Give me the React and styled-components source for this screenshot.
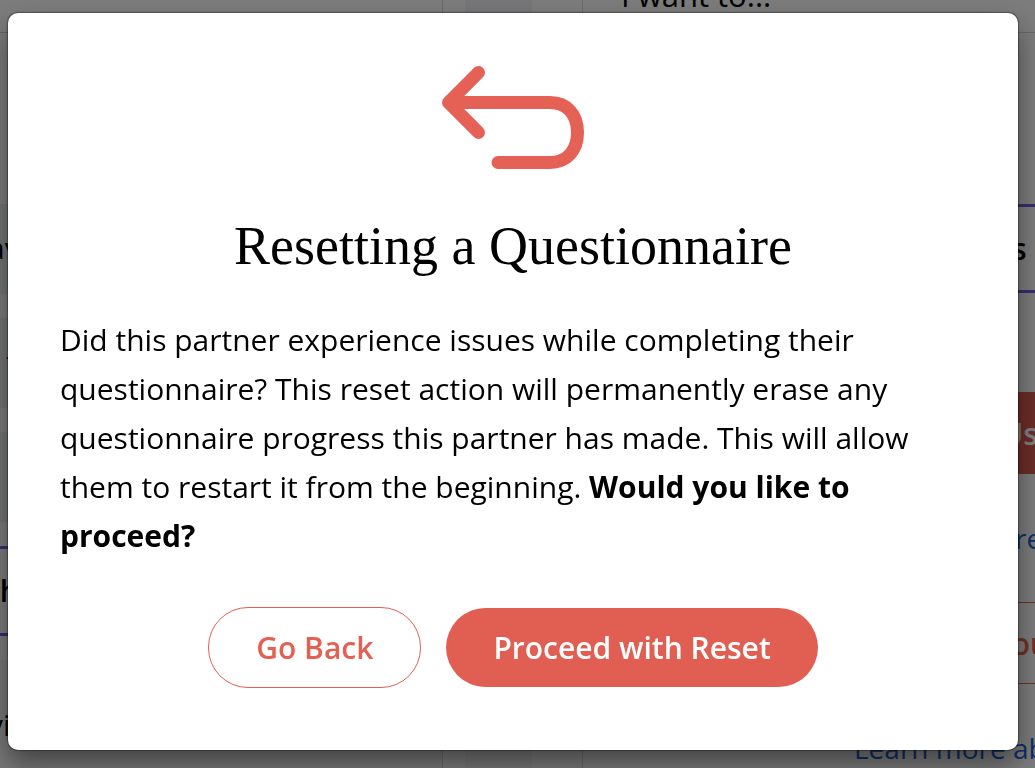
import styled, { createGlobalStyle } from 'styled-components';

const GlobalStyle = createGlobalStyle`
  * {
    box-sizing: border-box;
  }
  body {
    margin: 0;
    font-family: 'Open Sans', 'Noto Sans', sans-serif;
    font-size: 30px;
    color: #000;
    background: #f8f8f8;
  }
`;

const Page = styled.main`
  display: grid;
  grid-template-columns: 443px 139px 1fr;
  height: 100vh;
  overflow: hidden;
`;

const Column = styled.section`
  min-width: 0;
  height: 100vh;
  overflow: hidden;
  background: #f8f8f9;
  border: solid #d4d4d4;
  border-width: ${(props) => (props.$right ? '0 0 0 1px' : '0 1px 0 0')};
`;

const Gutter = styled.div`
  margin: 0 50px 0 22px;
  background: #efeff3;
`;

const ColumnHeader = styled.header`
  display: flex;
  align-items: flex-end;
  height: 33px;
  padding: 0 0 17px 38px;
  border-bottom: 1px solid #cfcfcf;
`;

const HeaderText = styled.h2`
  margin: 0;
  font-size: 31px;
  font-weight: 400;
  line-height: 40px;
`;

const Rows = styled.div`
  display: grid;
  gap: 24px;
  padding-top: 171px;
`;

const Row = styled.div`
  height: 90px;
  padding-left: ${(props) => (props.$inset ? '6px' : '0')};
  text-indent: ${(props) => (props.$inset ? '0' : '-12px')};
  line-height: 88px;
  background: #e6eae8;
`;

const LastRow = styled(Row)`
  height: 130px;
  line-height: 130px;
  background: #f1f1f4;
`;

const Selected = styled.div`
  height: 90px;
  text-indent: -12px;
  font-weight: 600;
  line-height: 84px;
  border: solid #6c5ce0;
  border-width: 3px 0;
`;

const Actions = styled.div`
  display: flex;
  flex-direction: column;
  margin-right: -60px;
  padding: 171px 0 0 38px;
  white-space: nowrap;
`;

const Choice = styled.div`
  height: 89px;
  padding-left: 281px;
  font-weight: 600;
  line-height: 84px;
  border: solid #6c5ce0;
  border-width: 3px 0;
`;

const PageButton = styled.button`
  height: 82px;
  margin-top: ${(props) => (props.$outlined ? '44px' : '99px')};
  padding: 0 0 0 ${(props) => (props.$outlined ? '372px' : '380px')};
  font: inherit;
  font-weight: 600;
  text-align: left;
  color: ${(props) => (props.$outlined ? '#e36053' : '#fff')};
  background: ${(props) => (props.$outlined ? 'transparent' : '#d65a4e')};
  border: ${(props) => (props.$outlined ? '1px solid #e36053' : '0')};
`;

const PageLink = styled.a`
  margin-top: 44px;
  padding-left: ${(props) => (props.$wide ? '233px' : '394px')};
  font-size: 28px;
  line-height: 40px;
  color: #1c60cf;
  text-decoration: none;
`;

const Backdrop = styled.div`
  position: fixed;
  inset: 0;
  padding: 13px 17px 18px 8px;
  background: rgba(0, 0, 0, 0.5);
`;

const Dialog = styled.div`
  display: flex;
  flex-direction: column;
  align-items: center;
  padding: 53px 52px 62px;
  background: #fff;
  border-radius: 10px;
  box-shadow:
    0 0 1px 1px rgba(0, 0, 0, 0.35),
    0 14px 28px 0 rgba(0, 0, 0, 0.45);
`;

const Icon = styled.svg`
  display: block;
  width: 142px;
  height: 103px;
`;

const Title = styled.h1`
  margin: 44px 0 0;
  font-family: 'Liberation Serif', serif;
  font-size: 54px;
  font-weight: 400;
  line-height: 66px;
`;

const Message = styled.p`
  width: 100%;
  margin: 36px 0 0;
  line-height: 49px;
`;

const Buttons = styled.div`
  display: flex;
  align-items: center;
  gap: 25px;
  margin-top: 47px;
`;

const Button = styled.button`
  height: ${(props) => (props.$primary ? '79px' : '81px')};
  padding: 0 47px;
  font: inherit;
  font-weight: 600;
  color: ${(props) => (props.$primary ? '#fff' : '#e36053')};
  background: ${(props) => (props.$primary ? '#e15f52' : '#fff')};
  border: ${(props) => (props.$primary ? '0' : '1px solid #e36053')};
  border-radius: 40px;
  cursor: pointer;
`;

function ResetIcon() {
  return (
    <Icon viewBox="0 0 142 103" fill="none" aria-hidden="true">
      <path
        d="M36.5 6.5 6.5 36.5l30 30M6.5 36.5H108c17 0 27.500 12 27.500 30s-10.500 30-27.500 30H56"
        stroke="#e56055"
        strokeWidth="13"
        strokeLinecap="round"
        strokeLinejoin="round"
      />
    </Icon>
  );
}

function Background() {
  return (
    <Page aria-hidden="true">
      <Column>
        <ColumnHeader />
        <Rows>
          <Row>av</Row>
          <Row $inset>t</Row>
          <Row />
          <Selected>th</Selected>
          <LastRow>vi</LastRow>
        </Rows>
      </Column>
      <Gutter />
      <Column $right>
        <ColumnHeader>
          <HeaderText>I want to...</HeaderText>
        </ColumnHeader>
        <Actions>
          <Choice>Partners</Choice>
          <PageButton tabIndex={-1}>Us</PageButton>
          <PageLink href="#more" tabIndex={-1}>
            re
          </PageLink>
          <PageButton $outlined tabIndex={-1}>
            Your
          </PageButton>
          <PageLink href="#about" $wide tabIndex={-1}>
            Learn more about
          </PageLink>
        </Actions>
      </Column>
    </Page>
  );
}

function App() {
  return (
    <>
      <GlobalStyle />
      <Background />
      <Backdrop>
        <Dialog role="dialog" aria-modal="true" aria-labelledby="reset-title">
          <ResetIcon />
          <Title id="reset-title">Resetting a Questionnaire</Title>
          <Message>
            Did this partner experience issues while completing their
            questionnaire? This reset action will permanently erase any
            questionnaire progress this partner has made. This will allow them
            to restart it from the beginning.{' '}
            <strong>Would you like to proceed?</strong>
          </Message>
          <Buttons>
            <Button type="button">Go Back</Button>
            <Button type="button" $primary>
              Proceed with Reset
            </Button>
          </Buttons>
        </Dialog>
      </Backdrop>
    </>
  );
}

export default App;
